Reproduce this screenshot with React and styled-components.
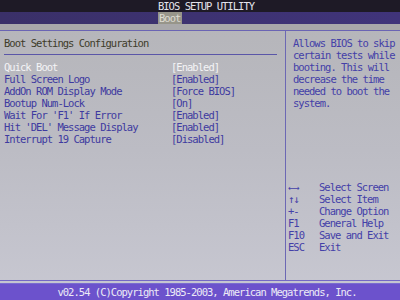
import React from 'react';
import styled, { createGlobalStyle } from 'styled-components';

const GlobalStyle = createGlobalStyle`
  body {
    margin: 0;
    background: #1c1824;
  }
`;

const Screen = styled.div`
  width: 400px;
  height: 300px;
  display: flex;
  flex-direction: column;
  overflow: hidden;
  font-family: "DejaVu Sans Mono", "Liberation Mono", monospace;
  font-size: 10.5px;
  letter-spacing: -0.98px;
  line-height: 12px;
  background: linear-gradient(180deg, #b4b4b8 0%, #bcbcc4 50%, #c8c8d2 100%);
`;

const TitleBar = styled.div`
  height: 12px;
  background: #1e1a26;
  color: #e4e4ec;
  text-align: center;
  padding-left: 12px;
  line-height: 12px;
`;

const TabBar = styled.div`
  height: 12px;
  background: linear-gradient(90deg, #3a3068 0%, #40347a 100%);
  display: flex;
  padding-left: 158px;
`;

const Tab = styled.div`
  width: 23px;
  background: #97958a;
  color: #dedcd2;
  padding-left: 1px;
  line-height: 12px;
`;

const Strip = styled.div`
  height: 6px;
  background: #a9a8aa;
  border-bottom: 1px solid #6a64b4;
`;

const Body = styled.div`
  flex: 1;
  display: flex;
  border-bottom: 1px solid #7468c4;
`;

const LeftPanel = styled.div`
  width: 286px;
  border-right: 1px solid #6c68b4;
  padding: 6px 8px 0 4px;
  box-sizing: border-box;
`;

const Heading = styled.div`
  color: #3e3c2a;
  padding-bottom: 5px;
  border-bottom: 1px solid #5a56a8;
  margin-bottom: 6px;
`;

const Row = styled.div`
  display: flex;
  color: ${(p) => (p.$active ? '#f4f4f6' : '#3e3aa0')};
`;

const Label = styled.span`
  width: 167px;
`;

const RightPanel = styled.div`
  flex: 1;
  padding: 6px 0 0 7px;
  color: #4440a8;
`;

const Help = styled.div`
  white-space: pre;
`;

const Legend = styled.div`
  margin: 72px 0 0 -5px;
  display: grid;
  grid-template-columns: 31px auto;
`;

const Gap = styled.div`
  height: 2px;
  background: #c6c6d0;
  border-bottom: 1px solid #7a6cd0;
`;

const Footer = styled.div`
  height: 16px;
  background: #6c52cc;
  color: #ecebf6;
  text-align: center;
  padding-left: 14px;
  line-height: 16px;
`;

const items = [
  ['Quick Boot', '[Enabled]'],
  ['Full Screen Logo', '[Enabled]'],
  ['AddOn ROM Display Mode', '[Force BIOS]'],
  ['Bootup Num-Lock', '[On]'],
  ["Wait For 'F1' If Error", '[Enabled]'],
  ["Hit 'DEL' Message Display", '[Enabled]'],
  ['Interrupt 19 Capture', '[Disabled]'],
];

const keys = [
  ['\u2190\u2192', 'Select Screen'],
  ['\u2191\u2193', 'Select Item'],
  ['+-', 'Change Option'],
  ['F1', 'General Help'],
  ['F10', 'Save and Exit'],
  ['ESC', 'Exit'],
];

const helpText = `Allows BIOS to skip
certain tests while
booting. This will
decrease the time
needed to boot the
system.`;

const App = () => {
  return (
    <Screen>
      <GlobalStyle />
      <TitleBar>BIOS SETUP UTILITY</TitleBar>
      <TabBar>
        <Tab>Boot</Tab>
      </TabBar>
      <Strip />
      <Body>
        <LeftPanel>
          <Heading>Boot Settings Configuration</Heading>
          {items.map(([label, value], i) => (
            <Row key={label} $active={i === 0}>
              <Label>{label}</Label>
              <span>{value}</span>
            </Row>
          ))}
        </LeftPanel>
        <RightPanel>
          <Help>{helpText}</Help>
          <Legend>
            {keys.map(([k, d]) => (
              <React.Fragment key={k}>
                <span>{k}</span>
                <span>{d}</span>
              </React.Fragment>
            ))}
          </Legend>
        </RightPanel>
      </Body>
      <Gap />
      <Footer>v02.54 (C)Copyright 1985-2003, American Megatrends, Inc.</Footer>
    </Screen>
  );
};

export default App;
